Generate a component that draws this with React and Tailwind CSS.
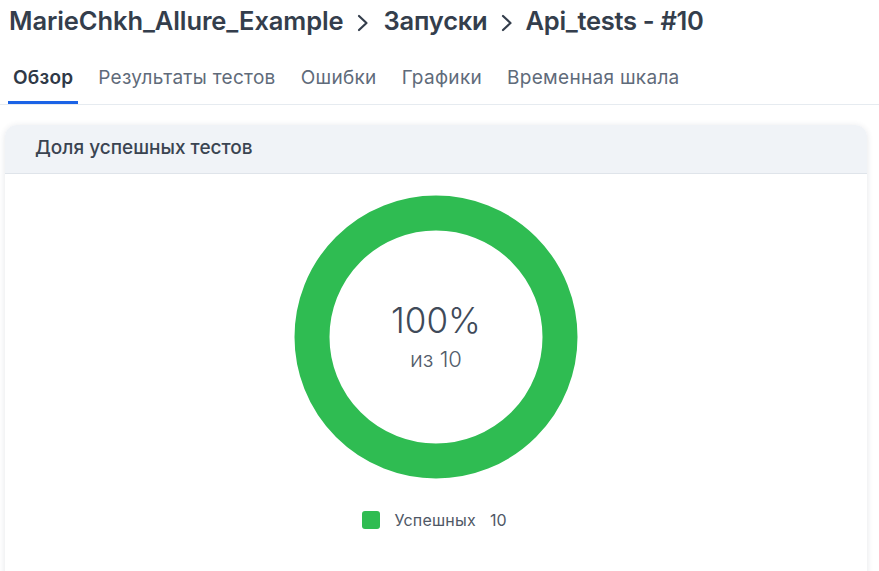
const tabs = ["Обзор", "Результаты тестов", "Ошибки", "Графики", "Временная шкала"];

function Chevron() {
  return (
    <svg width="12" height="18" viewBox="0 0 12 18" className="mx-[13px] mt-[2px] shrink-0">
      <polyline points="2,2 9.5,9 2,16" fill="none" stroke="#343e4c" strokeWidth="2.2" strokeLinecap="round" strokeLinejoin="round" />
    </svg>
  );
}

export default function App() {
  return (
    <div className="min-h-screen bg-white text-[#343e4c]" style={{ fontFamily: "Inter, 'Noto Sans', sans-serif" }}>
      <div className="flex items-center pl-[9px] pt-[5px] h-[38px]">
        <span className="text-[25.5px] font-semibold tracking-[-0.1px]">MarieChkh_Allure_Example</span>
        <Chevron />
        <span className="text-[25.5px] font-semibold tracking-[-0.2px] ml-[2px]">Запуски</span>
        <Chevron />
        <span className="text-[25.5px] font-semibold tracking-[-0.3px]">Api_tests - #10</span>
      </div>

      <div className="flex gap-[15px] pl-[8px] mt-[26px] border-b border-[#e6ebf0]">
        {tabs.map((t, i) => (
          <div
            key={t}
            className={
              i === 0
                ? "pb-[8px] px-[5px] border-b-[3px] border-[#1b63e6] text-[19px] font-semibold tracking-[0.2px] text-[#2f3947]"
                : "pb-[8px] px-[5px] border-b-[3px] border-transparent text-[19px] tracking-[0.3px] text-[#5f6b7a]"
            }
          >
            {t}
          </div>
        ))}
      </div>

      <div className="mx-[5px] mr-[12px] mt-[20px] rounded-t-[12px] shadow-[0_1px_6px_rgba(30,45,70,0.12)] bg-white h-[460px]">
        <div className="h-[49px] flex items-center pl-[30px] bg-[#f0f3f7] rounded-t-[12px] border-b border-[#dfe4ea]">
          <span className="text-[19px] font-medium text-[#3a4451]">Доля успешных тестов</span>
        </div>
        <div className="flex flex-col items-center pt-[21px]">
          <div className="relative w-[284px] h-[284px]">
            <svg width="284" height="284" viewBox="0 0 284 284">
              <circle cx="142" cy="142" r="124" fill="none" stroke="#2fbc52" strokeWidth="35" />
            </svg>
            <div className="absolute inset-0 flex flex-col items-center justify-center pb-[1px]">
              <span className="text-[35px] font-light leading-[40px] text-[#404a59]">100%</span>
              <span className="text-[22px] font-light leading-[28px] mt-[5px] text-[#525c6a]">из 10</span>
            </div>
          </div>
          <div className="flex items-center mt-[29px] ml-[-3px]">
            <span className="w-[18px] h-[18px] rounded-[3px] bg-[#2fbc52]" />
            <span className="ml-[14px] text-[16px] tracking-[0.2px] text-[#4f5866]">Успешных</span>
            <span className="ml-[14px] text-[16px] text-[#4f5866]">10</span>
          </div>
        </div>
      </div>
    </div>
  );
}
